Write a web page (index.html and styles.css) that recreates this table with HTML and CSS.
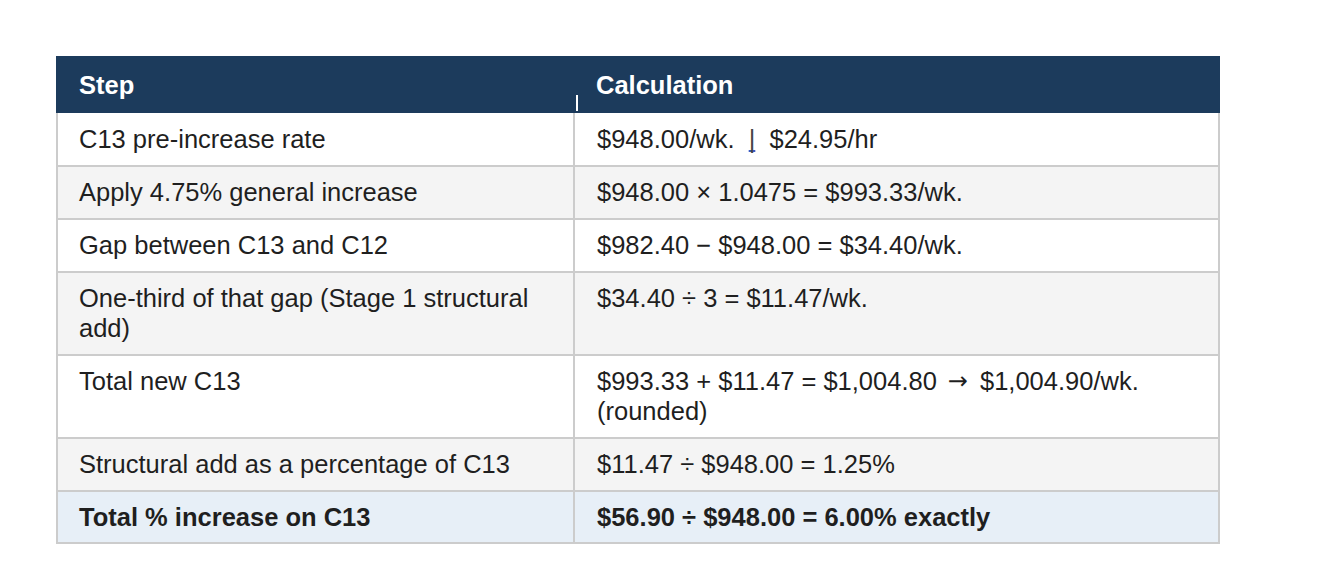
FILE: index.html
```html
<!DOCTYPE html>
<html lang="en">
<head>
<meta charset="utf-8">
<title>C13 calculation</title>
<link rel="stylesheet" href="styles.css">
</head>
<body>
<table class="calc-table">
  <colgroup>
    <col class="col-step">
    <col class="col-calc">
  </colgroup>
  <thead>
    <tr>
      <th>Step</th>
      <th class="calc-head"><span class="caret"></span>Calculation</th>
    </tr>
  </thead>
  <tbody>
    <tr class="row-white row-first">
      <td>C13 pre-increase rate</td>
      <td>$948.00/wk.&nbsp; <span class="pipe">|</span>&nbsp; $24.95/hr</td>
    </tr>
    <tr class="row-grey">
      <td>Apply 4.75% general increase</td>
      <td>$948.00 × 1.0475 = $993.33/wk.</td>
    </tr>
    <tr class="row-white">
      <td>Gap between C13 and C12</td>
      <td>$982.40 − $948.00 = $34.40/wk.</td>
    </tr>
    <tr class="row-grey">
      <td>One-third of that gap (Stage 1 structural add)</td>
      <td>$34.40 ÷ 3 = $11.47/wk.</td>
    </tr>
    <tr class="row-white">
      <td>Total new C13</td>
      <td><span class="line">$993.33 + $11.47 = $1,004.80<span class="arrow">→</span>$1,004.90/wk.</span><span class="line">(rounded)</span></td>
    </tr>
    <tr class="row-grey">
      <td>Structural add as a percentage of C13</td>
      <td>$11.47 ÷ $948.00 = 1.25%</td>
    </tr>
    <tr class="row-total">
      <td>Total % increase on C13</td>
      <td>$56.90 ÷ $948.00 = 6.00% exactly</td>
    </tr>
  </tbody>
</table>
</body>
</html>
```
FILE: styles.css
```css
html, body {
  margin: 0;
  padding: 0;
  background: #ffffff;
}

body {
  padding: 56px 0 0 56px;
  font-family: "Liberation Sans", Arial, Helvetica, sans-serif;
  color: #1f1f1f;
}

.calc-table {
  border-collapse: collapse;
  table-layout: fixed;
  width: 1162px;
  font-size: 25.5px;
  line-height: 30px;
}

.col-step {
  width: 517px;
}

.col-calc {
  width: 645px;
}

.calc-table th {
  background: #1c3b5c;
  color: #ffffff;
  font-weight: bold;
  text-align: left;
  vertical-align: top;
  padding: 12px 21px 11px;
  border: 2px solid #1c3b5c;
}

.calc-head {
  position: relative;
}

.caret {
  position: absolute;
  left: 1px;
  bottom: 0;
  width: 1.5px;
  height: 16px;
  background: #ffffff;
}

.calc-table td {
  text-align: left;
  vertical-align: top;
  padding: 10px 21px 11px 22px;
  border: 2px solid #cccccc;
}

.calc-table td:first-child {
  padding-left: 21px;
}

.row-first td {
  padding-top: 11px;
}

.row-white td {
  background: #ffffff;
}

.row-grey td {
  background: #f4f4f4;
}

.row-total td {
  background: #e7eff7;
  font-weight: bold;
  padding-bottom: 10px;
}

.line {
  display: block;
  white-space: nowrap;
}

.pipe {
  color: #444444;
  text-decoration: underline solid #3b5bc4;
  text-decoration-thickness: 2px;
  text-decoration-skip-ink: none;
  text-underline-offset: 2px;
}

.arrow {
  display: inline-block;
  margin: 0 12px 0 11px;
  font-family: "DejaVu Sans", sans-serif;
  font-size: 24px;
  line-height: 30px;
  vertical-align: top;
}
```
